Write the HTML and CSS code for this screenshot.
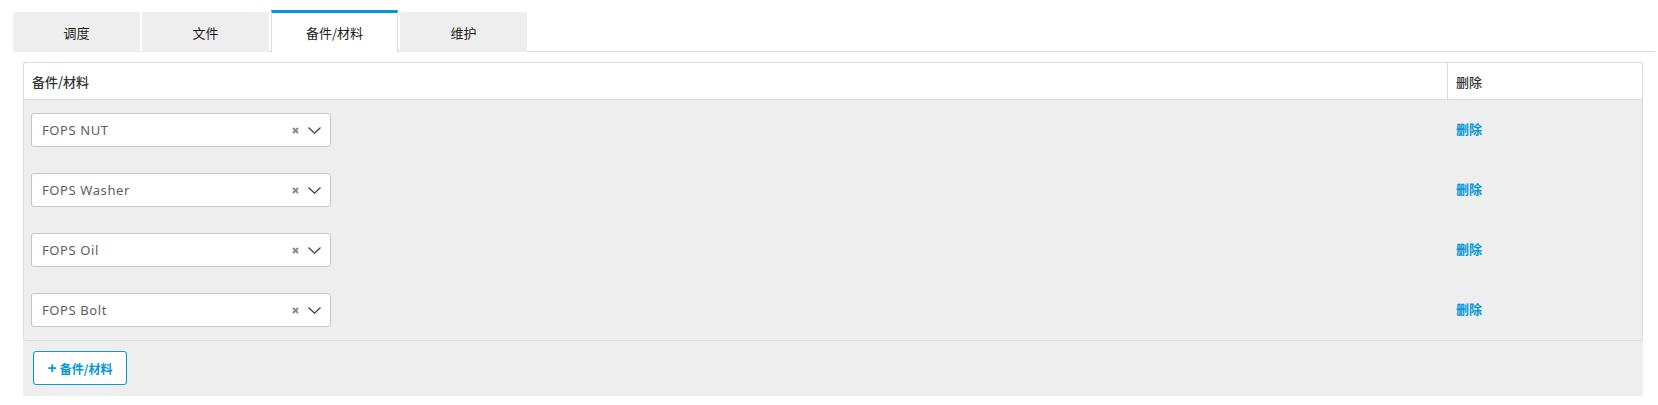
FILE: index.html
```html
<!DOCTYPE html>
<html lang="zh">
<head>
<meta charset="utf-8">
<title>备件/材料</title>
<link rel="stylesheet" href="styles.css">
</head>
<body>
<div class="tabbar">
  <div class="tab">调度</div>
  <div class="tab">文件</div>
  <div class="tab active">备件/材料</div>
  <div class="tab">维护</div>
</div>
<div class="panel">
  <div class="table">
    <div class="thead">
      <div class="th th-main">备件/材料</div>
      <div class="th th-del">删除</div>
    </div>
    <div class="row">
      <div class="cell-main">
        <div class="select"><span class="sel-text">FOPS NUT</span>
          <svg class="clear" width="7" height="7" viewBox="0 0 7 7"><path d="M1 1L6 6M6 1L1 6" stroke="#8a8a8a" stroke-width="2"/></svg>
          <svg class="chev" width="13" height="7" viewBox="0 0 13 7"><path d="M0.5 0.5L6.5 6.2L12.5 0.5" fill="none" stroke="#3c3c3c" stroke-width="1.2"/></svg>
        </div>
      </div>
      <div class="cell-del"><a class="del">删除</a></div>
    </div>
    <div class="row">
      <div class="cell-main">
        <div class="select"><span class="sel-text">FOPS Washer</span>
          <svg class="clear" width="7" height="7" viewBox="0 0 7 7"><path d="M1 1L6 6M6 1L1 6" stroke="#8a8a8a" stroke-width="2"/></svg>
          <svg class="chev" width="13" height="7" viewBox="0 0 13 7"><path d="M0.5 0.5L6.5 6.2L12.5 0.5" fill="none" stroke="#3c3c3c" stroke-width="1.2"/></svg>
        </div>
      </div>
      <div class="cell-del"><a class="del">删除</a></div>
    </div>
    <div class="row">
      <div class="cell-main">
        <div class="select"><span class="sel-text">FOPS Oil</span>
          <svg class="clear" width="7" height="7" viewBox="0 0 7 7"><path d="M1 1L6 6M6 1L1 6" stroke="#8a8a8a" stroke-width="2"/></svg>
          <svg class="chev" width="13" height="7" viewBox="0 0 13 7"><path d="M0.5 0.5L6.5 6.2L12.5 0.5" fill="none" stroke="#3c3c3c" stroke-width="1.2"/></svg>
        </div>
      </div>
      <div class="cell-del"><a class="del">删除</a></div>
    </div>
    <div class="row">
      <div class="cell-main">
        <div class="select"><span class="sel-text">FOPS Bolt</span>
          <svg class="clear" width="7" height="7" viewBox="0 0 7 7"><path d="M1 1L6 6M6 1L1 6" stroke="#8a8a8a" stroke-width="2"/></svg>
          <svg class="chev" width="13" height="7" viewBox="0 0 13 7"><path d="M0.5 0.5L6.5 6.2L12.5 0.5" fill="none" stroke="#3c3c3c" stroke-width="1.2"/></svg>
        </div>
      </div>
      <div class="cell-del"><a class="del">删除</a></div>
    </div>
  </div>
  <div class="footer">
    <button class="add-btn"><span class="plus">+</span> 备件/材料</button>
  </div>
</div>
</body>
</html>
```
FILE: styles.css
```css
* { box-sizing: border-box; }
html, body { margin: 0; padding: 0; background: #fff; }
body {
  font-family: "Noto Sans", "Noto Sans CJK SC", sans-serif;
  font-size: 13px;
  color: #222;
}
.tabbar {
  display: flex;
  align-items: flex-end;
  gap: 2px;
  margin: 10px 3px 0 13px;
  border-bottom: 1px solid #dcdcdc;
}
.tab {
  width: 127px;
  height: 40px;
  margin-bottom: -1px;
  background: #eeeeee;
  border-radius: 2px 2px 0 0;
  display: flex;
  align-items: center;
  justify-content: center;
  font-family: "Noto Sans CJK SC", sans-serif;
  font-size: 13px;
  color: #1a1a1a;
}
.tab.active {
  height: 42px;
  background: #fff;
  border-top: 3px solid #0696d7;
  border-left: 1px solid #dcdcdc;
  border-right: 1px solid #dcdcdc;
  border-radius: 0;
  padding-bottom: 1px;
}
.panel {
  margin: 10px 15px 0 23px;
  background: #eeeeee;
  padding-bottom: 11px;
}
.table {
  border: 1px solid #dcdcdc;
  border-radius: 3px;
  background: #eeeeee;
}
.thead {
  display: flex;
  height: 37px;
  background: #fff;
  border-bottom: 1px solid #dcdcdc;
  border-radius: 3px 3px 0 0;
}
.th {
  display: flex;
  align-items: center;
  font-family: "Noto Sans CJK SC", sans-serif;
  font-size: 13px;
  color: #333;
  font-weight: 500;
}
.th-main { flex: 1; padding-left: 8px; }
.th-del { width: 195px; border-left: 1px solid #dcdcdc; padding-left: 8px; }
.row {
  display: flex;
  height: 60px;
}
.cell-main { flex: 1; padding: 13px 0 0 7px; }
.cell-del {
  width: 195px;
  padding-left: 9px;
  display: flex;
  align-items: center;
  padding-bottom: 3px;
}
.del {
  font-family: "Noto Sans CJK SC", sans-serif;
  font-size: 13px;
  font-weight: 700;
  color: #0696d7;
  cursor: pointer;
}
.select {
  width: 300px;
  height: 34px;
  background: #fff;
  border: 1px solid #c6c6c6;
  border-radius: 3px;
  display: flex;
  align-items: center;
  padding: 0 9px 0 10px;
}
.sel-text {
  flex: 1;
  color: #5e5e5e;
  font-size: 13px;
  letter-spacing: 0.6px;
}
.clear { margin-right: 9px; margin-top: 1px; }
.chev { margin-top: 1px; }
.footer {
  padding: 10px 0 0 10px;
}
.add-btn {
  height: 34px;
  width: 94px;
  background: #fff;
  border: 1px solid #0696d7;
  border-radius: 3px;
  color: #0696d7;
  font-family: "Noto Sans CJK SC", sans-serif;
  font-size: 12px;
  font-weight: 700;
  padding: 0;
  display: flex;
  align-items: center;
  justify-content: center;
  gap: 3px;
}
.plus { font-family: "Noto Sans", sans-serif; font-size: 16px; font-weight: 700; line-height: 1; }
```
